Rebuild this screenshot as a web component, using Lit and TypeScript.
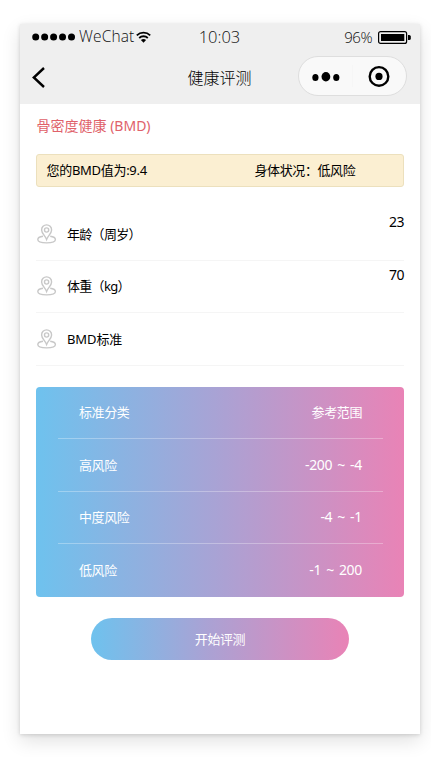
import { LitElement, html, css, svg } from "lit";
import { customElement, property } from "lit/decorators.js";

const signalDots = [0, 1, 2, 3, 4];

@customElement("status-bar")
class StatusBar extends LitElement {
  static styles = css`
    :host { display: grid; grid-template-columns: 1fr auto 1fr; height: 26px; padding: 0 9px 0 12px; color: #111; font-family: "Open Sans", "Noto Sans", sans-serif; font-weight: 300; }
    .left, .right { display: flex; align-items: center; }
    .right { justify-content: flex-end; }
    .carrier { width: 57px; margin-left: 4px; font-size: 15.5px; line-height: 23px; letter-spacing: 0.15px; padding-bottom: 2px; white-space: nowrap; }
    .time { font-size: 16.5px; line-height: 25px; letter-spacing: 0; margin-right: 4px; }
    .percent { font-size: 15px; line-height: 26px; margin-right: 6px; letter-spacing: -0.5px; }
    svg { display: block; flex: none; }
  `;
  render() {
    return html`
      <div class="left">
        <svg width="43" height="8" viewBox="0 0 43 8">
          ${signalDots.map((i) => svg`<circle cx=${3.7 + i * 8.95} cy="4" r="3.5" fill="#000" />`)}
        </svg>
        <span class="carrier">WeChat</span>
        <svg width="15" height="12" viewBox="0 0 15 12" fill="none" stroke="#000" stroke-width="1.8">
          <path d="M0.8 4.4A9.6 9.6 0 0 1 14.2 4.4" />
          <path d="M3.2 7A6.2 6.2 0 0 1 11.8 7" />
          <path d="M7.5 11.7 4.9 9.1a3.8 3.8 0 0 1 5.2 0z" fill="#000" stroke="none" />
        </svg>
      </div>
      <span class="time">10:03</span>
      <div class="right">
        <span class="percent">96%</span>
        <svg width="33" height="13" viewBox="0 0 33 13">
          <rect x="0.6" y="0.6" width="28" height="11.8" rx="2" fill="none" stroke="#000" stroke-width="1.2" />
          <rect x="3" y="3" width="23.3" height="7" fill="#000" />
          <path d="M30 4h1.2a1.6 1.6 0 0 1 1.6 1.6v1.8A1.6 1.6 0 0 1 31.2 9H30z" fill="#000" />
        </svg>
      </div>
    `;
  }
}

@customElement("nav-bar")
class NavBar extends LitElement {
  static styles = css`
    :host { display: grid; grid-template-columns: 1fr auto 1fr; align-items: center; height: 54px; padding: 0 13px 0 12px; box-sizing: border-box; }
    .back { margin-top: 1px; }
    .title { font: 300 16px/22px "Noto Sans CJK SC", sans-serif; color: #000; }
    .capsule { justify-self: end; display: flex; align-items: center; width: 109px; height: 40px; box-sizing: border-box; border: 1px solid #dedede; border-radius: 20px; background: #f9f9f9; margin-top: -2px; }
    .half { flex: 1; display: flex; justify-content: center; }
    .half + .half { border-left: 1px solid #f6f6f6; }
    svg { display: block; }
  `;
  render() {
    return html`
      <svg class="back" width="13" height="21" viewBox="0 0 13 21" fill="none" stroke="#000" stroke-width="2.4"><path d="M12 1 1.8 10.5 12 20" /></svg>
      <span class="title">健康评测</span>
      <div class="capsule">
        <div class="half">
          <svg width="28" height="11" viewBox="0 0 28 11">
            <ellipse cx="3.4" cy="6.4" rx="3.1" ry="3.5" />
            <ellipse cx="13.9" cy="5.7" rx="4.4" ry="4.7" />
            <ellipse cx="24.3" cy="6.4" rx="3.1" ry="3.5" />
          </svg>
        </div>
        <div class="half">
          <svg width="23" height="22" viewBox="0 0 23 22">
            <circle cx="11" cy="11.4" r="9.3" fill="none" stroke="#000" stroke-width="2.4" />
            <circle cx="11" cy="11.4" r="3.6" />
          </svg>
        </div>
      </div>
    `;
  }
}

@customElement("info-row")
class InfoRow extends LitElement {
  @property() label = "";
  @property() value = "";
  static styles = css`
    :host { display: flex; align-items: center; height: 52.5px; box-sizing: border-box; border-bottom: 1px solid #f5f5f5; color: #000; font: 13px/18px "Noto Sans", "Noto Sans CJK SC", sans-serif; letter-spacing: -0.1px; }
    :host([tight]) { letter-spacing: -0.7px; }
    svg { display: block; margin: 0 10px 0 1px; }
    .value { align-self: flex-start; margin: 5px 0 0 auto; font-size: 14px; letter-spacing: -0.5px; }
  `;
  render() {
    return html`
      <svg width="20" height="20" viewBox="0 0 20 20" fill="none" stroke="#c8c8c8" stroke-width="1.4">
        <path d="M9.6 15.4C8.5 12.2 4.6 9.6 4.6 5.9a5 5 0 0 1 10 0c0 3.7-3.9 6.3-5 9.5z" />
        <circle cx="9.6" cy="6" r="2.1" />
        <path d="M6 12.3C2.9 12.7.8 13.9.8 15.5c0 2 3.9 3.4 8.8 3.4s8.8-1.4 8.8-3.4c0-1.6-2.1-2.8-5.2-3.2" />
      </svg>
      <span>${this.label}</span>
      <span class="value">${this.value}</span>
    `;
  }
}

const levels = [
  ["标准分类", "参考范围"],
  ["高风险", "-200 ~ -4"],
  ["中度风险", "-4 ~ -1"],
  ["低风险", "-1 ~ 200"],
];

@customElement("app-root")
class AppRoot extends LitElement {
  static styles = css`
    :host { display: block; height: 757px; box-sizing: border-box; padding: 24px 11px 23px 20px; background: #fff; overflow: hidden; font: 13px/18px "Noto Sans", "Noto Sans CJK SC", sans-serif; letter-spacing: -0.4px; color: #000; }
    .phone { height: 710px; background: #fff; box-shadow: 0 7px 18px rgba(0, 0, 0, 0.12), 0 1px 4px rgba(0, 0, 0, 0.15); }
    .head { background: #efefef; height: 80px; letter-spacing: normal; }
    .body { padding: 0 16px; }
    .heading { height: 50px; box-sizing: border-box; padding: 12px 0 0 0.5px; color: #e0616a; font-size: 14px; line-height: 20px; letter-spacing: 0; }
    .notice { display: grid; grid-template-columns: 208px 1fr; align-items: center; height: 33px; box-sizing: border-box; border: 1px solid #ece0bd; border-radius: 3px; padding: 0 0 2px 9.5px; background: #fbefd2; }
    .notice span:first-child { letter-spacing: -0.3px; }
    .rows { padding-top: 21px; }
    .table { margin-top: 21px; height: 210.5px; box-sizing: border-box; padding: 0 21px 0 22px; border-radius: 4px; background: linear-gradient(90deg, #6ec2ee, #aaa2d4 50%, #e983b6); color: #fff; }
    .line { display: flex; justify-content: space-between; align-items: center; height: 52.5px; box-sizing: border-box; padding: 0 21px; border-bottom: 1px solid rgba(255, 255, 255, 0.3); }
    .line:last-child { border-bottom-color: transparent; }
    .line:not(:first-child) span:last-child { font-size: 14px; letter-spacing: -0.3px; word-spacing: 1.7px; }
    .start { display: block; width: 258px; height: 42px; margin: 20.5px auto 0; padding: 0; border: 0; border-radius: 21px; background: linear-gradient(90deg, #6ec2ee, #aaa2d4 45%, #e983b6); color: #fff; font: inherit; letter-spacing: inherit; }
  `;
  render() {
    return html`
      <div class="phone">
        <div class="head"><status-bar></status-bar><nav-bar></nav-bar></div>
        <div class="body">
          <div class="heading">骨密度健康 (BMD)</div>
          <div class="notice"><span>您的BMD值为:9.4</span><span>身体状况：低风险</span></div>
          <div class="rows">
            <info-row tight label="年龄（周岁）" value="23"></info-row>
            <info-row tight label="体重（kg）" value="70"></info-row>
            <info-row label="BMD标准"></info-row>
          </div>
          <div class="table">
            ${levels.map(([name, range]) => html`<div class="line"><span>${name}</span><span>${range}</span></div>`)}
          </div>
          <button class="start">开始评测</button>
        </div>
      </div>
    `;
  }
}
